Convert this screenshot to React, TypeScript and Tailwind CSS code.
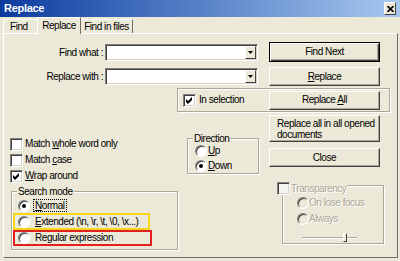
import type { ReactNode } from 'react'

const disabledText = 'text-[#aca899] [text-shadow:1px_1px_0_#fff]'

function Tick() {
  return (
    <svg width="7" height="7" viewBox="0 0 7 7">
      <path d="M0 2 L2 4 L6 0 L6 3 L2 7 L0 5 Z" fill="#000" />
    </svg>
  )
}

function CheckBox({ checked = false, disabled = false }: { checked?: boolean; disabled?: boolean }) {
  return (
    <span
      className={`flex h-[13px] w-[13px] shrink-0 items-center justify-center border border-t-[#808080] border-l-[#808080] border-r-white border-b-white shadow-[inset_1px_1px_0_#404040,inset_-1px_-1px_0_#d4d0c8] ${
        disabled ? 'bg-[#f4f3ee]' : 'bg-white'
      }`}
    >
      {checked ? <Tick /> : null}
    </span>
  )
}

function Radio({ checked = false, disabled = false }: { checked?: boolean; disabled?: boolean }) {
  return (
    <span
      className={`flex h-[12px] w-[12px] shrink-0 items-center justify-center rounded-full border border-t-[#808080] border-l-[#808080] border-r-white border-b-white shadow-[inset_1px_1px_0_#404040] ${
        disabled ? 'bg-[#ece9d8]' : 'bg-white'
      }`}
    >
      {checked ? <span className="h-[4px] w-[4px] rounded-full bg-black" /> : null}
    </span>
  )
}

function Button({ children, className = '', isDefault = false }: { children: ReactNode; className?: string; isDefault?: boolean }) {
  return (
    <button
      type="button"
      className={`flex w-[111px] shrink-0 items-center bg-[#ece9d8] ${
        isDefault
          ? 'border border-black shadow-[inset_1px_1px_0_#fff,inset_-1px_-1px_0_#404040,inset_-2px_-2px_0_#aca899]'
          : 'border border-t-white border-l-white border-r-[#404040] border-b-[#404040] shadow-[inset_-1px_-1px_0_#aca899]'
      } ${className}`}
    >
      {children}
    </button>
  )
}

function Combo() {
  return (
    <div className="flex h-[17px] w-[153px] items-center justify-end border border-t-[#808080] border-l-[#808080] border-r-white border-b-white bg-white pr-[1px] shadow-[inset_1px_1px_0_#404040,inset_-1px_-1px_0_#d4d0c8]">
      <span className="flex h-[13px] w-[11px] items-center justify-center border border-t-white border-l-white border-r-[#404040] border-b-[#404040] bg-[#ece9d8]">
        <svg width="5" height="3" viewBox="0 0 5 3">
          <path d="M0 0 H5 L2.5 3 Z" fill="#000" />
        </svg>
      </span>
    </div>
  )
}

function Group({ className = '', children }: { className?: string; children: ReactNode }) {
  return (
    <div className={`relative shrink-0 border border-[#aca899] shadow-[inset_1px_1px_0_#fff,1px_1px_0_#fff] ${className}`}>
      {children}
    </div>
  )
}

function Legend({ children }: { children: ReactNode }) {
  return <span className="absolute -top-[7px] left-[5px] bg-[#ece9d8] px-[1px] leading-[13px]">{children}</span>
}

export default function App() {
  return (
    <div className="h-[261px] w-[400px] overflow-hidden bg-[#ece9d8] font-['Liberation_Sans',Arial,sans-serif] text-[10px] leading-none tracking-[-0.45px] whitespace-nowrap text-black">
      <div className="flex h-[17px] items-center justify-between bg-linear-to-r from-[#0a3a9e] to-[#a8c8ee] pr-[4px] pl-[4px]">
        <span className="text-[11px] font-bold tracking-[-0.3px] text-white">Replace</span>
        <span className="flex h-[13px] w-[12px] items-center justify-center border border-t-white border-l-white border-r-[#404040] border-b-[#404040] bg-[#ece9d8]">
          <svg width="7" height="6" viewBox="0 0 7 6">
            <path d="M0.5 0 L6.5 6 M6.5 0 L0.5 6" stroke="#000" strokeWidth="1.6" />
          </svg>
        </span>
      </div>

      <div className="flex h-[16px] items-end pl-[3px]">
        <div className="flex h-[14px] w-[34px] items-center border-t border-l border-white pl-[6px]">Find</div>
        <div className="relative z-10 -mb-[1px] flex h-[17px] w-[44px] items-start justify-center border-t border-l border-r border-t-white border-l-white border-r-[#716f64] bg-[#ece9d8] pt-[3px]">
          Replace
        </div>
        <div className="flex h-[14px] w-[52px] items-center justify-center border-t border-r border-t-white border-r-[#716f64]">
          Find in files
        </div>
      </div>

      <div className="ml-[3px] h-[225px] w-[395px] border border-t-white border-l-white border-r-[#716f64] border-b-[#716f64]">
        <div className="mt-[8px] flex">
          <div className="w-[265px] shrink-0 pt-[2px]">
            <div className="flex h-[17px] items-center">
              <span className="w-[99px] text-right">Find what :</span>
              <span className="ml-[2px]"><Combo /></span>
            </div>
            <div className="mt-[7px] flex h-[17px] items-center">
              <span className="w-[99px] text-right">Replace with :</span>
              <span className="ml-[2px]"><Combo /></span>
            </div>
          </div>
          <div className="flex flex-col">
            <Button isDefault className="h-[20px] justify-center">Find Next</Button>
            <Button className="mt-[5px] h-[19px] justify-center">
              <span><u>R</u>eplace</span>
            </Button>
          </div>
        </div>

        <Group className="mt-[2px] ml-[173px] flex h-[24px] w-[213px] items-center">
          <span className="ml-[5px]"><CheckBox checked /></span>
          <span className="ml-[3px]">In selection</span>
          <Button className="mr-[9px] ml-auto h-[19px] justify-center">
            <span>Replace <u>A</u>ll</span>
          </Button>
        </Group>

        <div className="mt-[3px] flex">
          <div className="flex w-[265px] shrink-0">
            <div className="ml-[6px] w-[168px] shrink-0 pt-[21px]">
              <div className="flex h-[16px] items-center gap-[2px]">
                <CheckBox />
                <span>Match <u>w</u>hole word only</span>
              </div>
              <div className="flex h-[16px] items-center gap-[2px]">
                <CheckBox />
                <span>Match <u>c</u>ase</span>
              </div>
              <div className="flex h-[16px] items-center gap-[2px]">
                <CheckBox checked />
                <span><u>W</u>rap around</span>
              </div>

              <Group className="mt-[7px] ml-[1px] h-[59px] w-[167px] pt-[6px]">
                <Legend>Search mode</Legend>
                <div className="flex h-[15px] items-center pl-[6px]">
                  <Radio checked />
                  <span className="ml-[3px] border border-dotted border-black px-[1px] leading-[11px]"><u>N</u>ormal</span>
                </div>
                <div className="ml-[1px] flex h-[17px] w-[137px] items-center border-2 border-[#f8d61c] pl-[3px]">
                  <Radio />
                  <span className="ml-[5px]"><u>E</u>xtended (\n, \r, \t, \0, \x...)</span>
                </div>
                <div className="ml-[1px] flex h-[16px] w-[139px] items-center border-2 border-[#e41f1f] pl-[3px]">
                  <Radio />
                  <span className="ml-[5px]">Re<u>g</u>ular expression</span>
                </div>
              </Group>
            </div>

            <Group className="mt-[23px] ml-[9px] h-[36px] w-[72px] pt-[4px] pl-[7px]">
              <Legend>Direction</Legend>
              <div className="flex h-[15px] items-center">
                <Radio />
                <span className="ml-[1px]"><u>U</u>p</span>
              </div>
              <div className="flex h-[15px] items-center">
                <Radio checked />
                <span className="ml-[1px]"><u>D</u>own</span>
              </div>
            </Group>
          </div>

          <div className="flex flex-col">
            <Button className="h-[27px] flex-col items-start justify-center px-[7px] text-left leading-[11px]">
              <span>Replace all in all opened</span>
              <span>documents</span>
            </Button>
            <Button className="mt-[6px] h-[19px] justify-center">Close</Button>

            <Group className="mt-[18px] ml-[13px] h-[59px] w-[102px] pt-[9px] pl-[14px]">
              <span className="absolute -top-[4px] -left-[6px] flex items-center bg-[#ece9d8] pr-[1px]">
                <CheckBox disabled />
                <span className={`ml-[1px] ${disabledText}`}>Transparency</span>
              </span>
              <div className="flex h-[16px] items-center">
                <Radio disabled />
                <span className={`ml-[0px] ${disabledText}`}>On lose focus</span>
              </div>
              <div className="flex h-[16px] items-center">
                <Radio disabled />
                <span className={`ml-[0px] ${disabledText}`}>Always</span>
              </div>
              <div className="relative mt-[6px] ml-[5px] flex h-[9px] w-[55px] items-center">
                <div className="h-[2px] w-full border-t border-b border-t-[#aca899] border-b-white" />
                <div className="absolute top-0 left-[41px] h-[9px] w-[4px] border border-t-white border-l-white border-r-[#404040] border-b-[#404040] bg-[#ece9d8]" />
              </div>
            </Group>
          </div>
        </div>
      </div>
    </div>
  )
}
